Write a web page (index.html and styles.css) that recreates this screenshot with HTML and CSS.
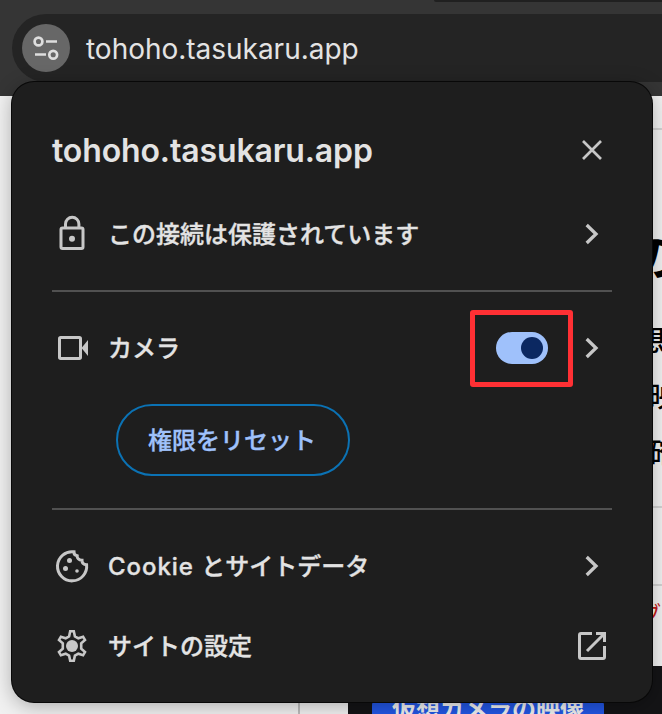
FILE: index.html
```html
<!DOCTYPE html>
<html lang="ja">
<head>
<meta charset="utf-8">
<title>tohoho.tasukaru.app</title>
<link rel="stylesheet" href="styles.css">
</head>
<body>
<header class="toolbar">
  <div class="tab"></div>
  <div class="omnibox">
    <span class="tune"><svg width="48" height="48" viewBox="0 0 48 48" fill="none" stroke="#dedede" stroke-width="2.7"><circle cx="16.5" cy="17.5" r="3.9"/><path d="M24 17.5h11M13 30.5h11"/><circle cx="31.2" cy="30.7" r="3.9"/></svg></span>
    <span class="url">tohoho.tasukaru.app</span>
  </div>
</header>
<main class="page">
  <div class="rule rule-top"></div>
  <h2 class="headline">の</h2>
  <p class="copy">想</p>
  <p class="copy copy-inset">映</p>
  <p class="copy copy-inset">確</p>
  <div class="rule rule-mid"></div>
  <div class="rule rule-low"></div>
  <p class="warning">ブ</p>
  <div class="bottom">
    <div class="side"></div>
    <div class="video"><span class="badge">仮想カメラの映像</span></div>
  </div>
</main>
<section class="popup">
  <div class="title-row">
    <h1 class="title">tohoho.tasukaru.app</h1>
    <svg class="end" width="40" height="40" viewBox="0 0 40 40" fill="none" stroke="#c7c7c7" stroke-width="2.7"><path d="M11 11l18 18M29 11l-18 18"/></svg>
  </div>
  <div class="row row-secure">
    <svg class="icon" width="40" height="40" viewBox="0 0 40 40" fill="none" stroke="#c7c7c7" stroke-width="3"><rect x="9" y="14" width="22" height="20.5" rx="1.5"/><path d="M13.5 14v-4a6.7 6.7 0 0 1 13.4 0V14"/><circle cx="20" cy="24.7" r="3" fill="#c7c7c7" stroke="none"/></svg>
    <span class="label label-secure">この接続は保護されています</span>
    <svg class="end" width="40" height="40" viewBox="0 0 40 40" fill="none" stroke="#c7c7c7" stroke-width="3.3"><path d="M14.7 11l9.3 9-9.3 9"/></svg>
  </div>
  <div class="divider"></div>
  <div class="row row-camera">
    <svg class="icon" width="40" height="40" viewBox="0 0 40 40" fill="none" stroke="#c7c7c7" stroke-width="3"><rect x="7.5" y="9.5" width="21" height="21" rx="1.2"/><path d="M29.5 20l6.5-8v16z" fill="#c7c7c7" stroke="none"/></svg>
    <span class="label">カメラ</span>
    <span class="marker"><span class="switch"><span class="knob"></span></span></span>
    <svg class="end" width="40" height="40" viewBox="0 0 40 40" fill="none" stroke="#c7c7c7" stroke-width="3.3"><path d="M14.7 11l9.3 9-9.3 9"/></svg>
  </div>
  <button class="reset"><span class="reset-text">権限をリセット</span></button>
  <div class="divider"></div>
  <div class="row row-cookie">
    <svg class="icon" width="40" height="40" viewBox="0 0 40 40" fill="none" stroke="#c7c7c7" stroke-width="3"><path d="M22 5.8A14.6 14.6 0 1 0 34.6 18.7C32 18.5 30 17 30 14.2C26.5 14.2 25 12 25.2 9.8C23 9.3 21.8 8 22 5.8z"/><g fill="#c7c7c7" stroke="none"><circle cx="17.5" cy="14.5" r="2.5"/><circle cx="13.5" cy="22.5" r="2.5"/><circle cx="25" cy="25" r="1.8"/></g></svg>
    <span class="label label-cookie"><span class="latin">Cookie </span>とサイトデータ</span>
    <svg class="end" width="40" height="40" viewBox="0 0 40 40" fill="none" stroke="#c7c7c7" stroke-width="3.3"><path d="M14.7 11l9.3 9-9.3 9"/></svg>
  </div>
  <div class="row row-settings">
    <svg class="icon" width="40" height="40" viewBox="0 0 40 40" fill="none" stroke="#c7c7c7" stroke-width="2.6"><path d="M18.2 5.3h3.6l1.1 5 3.4 2 4.8-1.6 1.9 3.2-3.8 3.4v5.4l3.8 3.4-1.9 3.2-4.8-1.6-3.4 2-1.1 5h-3.6l-1.1-5-3.4-2-4.8 1.6-1.9-3.2 3.8-3.4v-5.4l-3.8-3.4 1.9-3.2 4.8 1.6 3.4-2z"/><circle cx="20" cy="20" r="6" fill="#c7c7c7" stroke="none"/></svg>
    <span class="label">サイトの設定</span>
    <svg class="end" width="40" height="40" viewBox="0 0 40 40" fill="none" stroke="#c7c7c7" stroke-width="3"><path d="M20 7.5H9a1.5 1.5 0 0 0-1.5 1.5v22a1.5 1.5 0 0 0 1.5 1.5h22a1.5 1.5 0 0 0 1.5-1.5V20M24 7.5h8.5V16M32 8L15 25"/></svg>
  </div>
</section>
</body>
</html>
```
FILE: styles.css
```css
* { box-sizing: border-box; }
body {
  margin: 0;
  width: 662px;
  height: 714px;
  overflow: hidden;
  position: relative;
  background: #f1f1f1;
  color: #e3e3e3;
  font-family: Inter, "Noto Sans CJK JP", sans-serif;
}
h1, h2, p { margin: 0; }
.toolbar { height: 96px; background: #353535; }
.tab { height: 2px; margin-left: 434px; background: #202020; border-bottom-left-radius: 2px; }
.omnibox {
  display: flex;
  align-items: center;
  height: 68px;
  margin: 12px 0 0 12px;
  padding-left: 10px;
  background: #242424;
  border-radius: 34px 0 0 34px;
}
.tune { width: 48px; height: 48px; border-radius: 50%; background: #676767; }
.url { margin-left: 16px; padding-top: 1px; font-size: 28px; letter-spacing: -0.02px; }
.page { display: flex; flex-direction: column; height: 618px; color: #000; background: #f1f1f1; }
.page > * { flex: none; }
.rule { height: 2px; margin-left: 300px; background: #d2d2d2; }
.rule-top { margin-top: 32px; }
.headline { height: 80px; margin: 88px 0 0 631px; font-size: 48px; line-height: 80px; font-weight: 700; white-space: nowrap; }
.copy { height: 56px; margin-left: 637px; font-size: 28px; line-height: 56px; font-weight: 500; white-space: nowrap; }
.headline + .copy { margin-top: 15px; }
.copy-inset { margin-left: 649px; }
.rule-mid { margin-top: 25px; }
.rule-low { margin-top: 76px; }
.warning { height: 80px; margin-left: 640px; font-size: 21px; line-height: 56px; color: #c41818; }
.bottom { display: flex; height: 48px; }
.side { width: 300px; border-right: 2px solid #bcbcbc; }
.video { flex: 1; margin-left: 48px; padding: 28px 0 0 24px; background: #141416; }
.badge {
  display: block;
  width: 232px;
  height: 40px;
  border-radius: 12px;
  background: #2256e4;
  color: #f0f0f0;
  font-size: 24px;
  line-height: 32px;
  font-weight: 700;
  text-align: center;
}
.popup {
  position: absolute;
  left: 12px;
  top: 82px;
  width: 640px;
  height: 620px;
  padding: 36px 40px 0;
  display: flex;
  flex-direction: column;
  background: #1e1e1e;
  border-radius: 22px;
  box-shadow: 0 0 0 1px #080808, 0 4px 20px rgba(0, 0, 0, .3);
}
.title-row { display: flex; align-items: center; height: 64px; }
.title { font-size: 32px; font-weight: 600; letter-spacing: -0.13px; }
.row { display: flex; align-items: center; height: 64px; }
.icon, .end, .label { flex: none; }
.end { margin-left: auto; }
.label {
  margin-left: 16px;
  padding-bottom: 3px;
  font-size: 24px;
  font-weight: 500;
  white-space: nowrap;
  -webkit-text-stroke: 0.35px currentColor;
}
.latin { letter-spacing: 0.95px; }
.row-secure { margin-top: 20px; }
.divider { height: 2px; flex: none; background: #515151; }
.row-secure + .divider { margin-top: 24px; }
.row-camera { margin-top: 24px; }
.marker {
  display: grid;
  place-items: center;
  width: 103px;
  height: 77px;
  margin: 0 -1px 0 auto;
  border: 5px solid #ff3034;
  border-radius: 3px;
}
.row-camera .end { margin-left: 0; }
.switch { display: flex; justify-content: flex-end; width: 52px; height: 32px; padding: 5px; border-radius: 16px; background: #9fc1fb; }
.knob { width: 22px; height: 22px; border-radius: 50%; background: #0b2861; }
.reset {
  width: 234px;
  height: 72px;
  flex: none;
  margin: 24px 0 32px 64px;
  padding: 0 2px 3px 0;
  border: 2px solid #0b72b4;
  border-radius: 36px;
  background: transparent;
  color: #9fc1fb;
  font: 500 24px "Noto Sans CJK JP", sans-serif;
  -webkit-text-stroke: 0.35px currentColor;
}
.row-cookie { margin-top: 24px; }
.row-settings { margin-top: 16px; }
```
